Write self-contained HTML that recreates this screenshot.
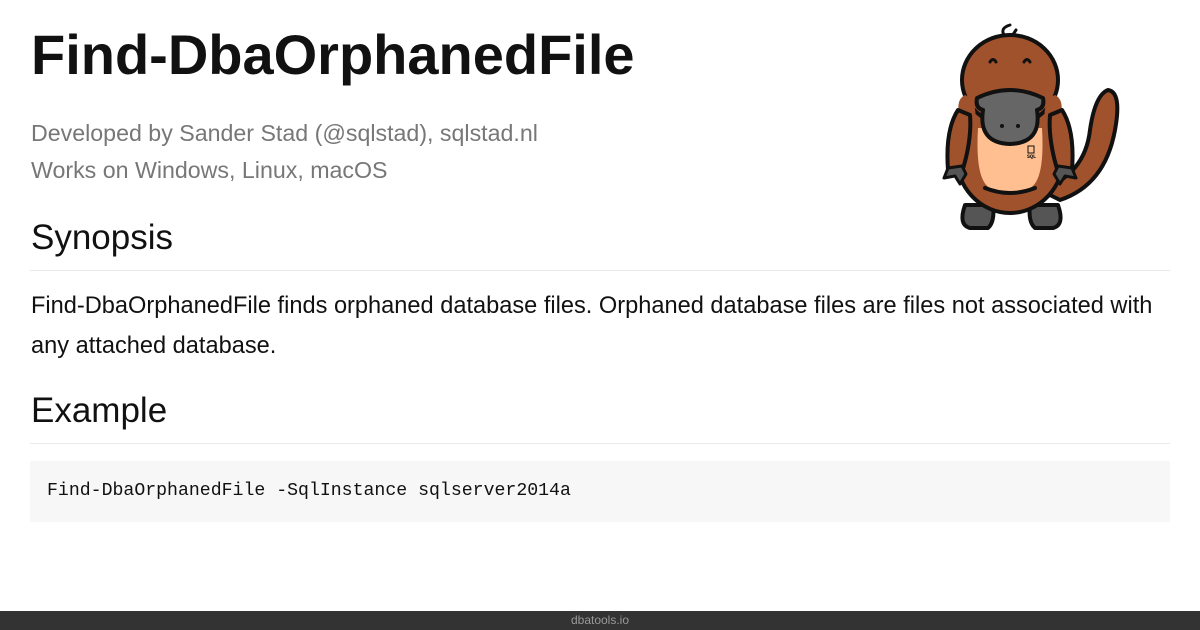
<!DOCTYPE html>
<html><head><style>
body{margin:0;width:1200px;height:630px;background:#fff;position:relative;overflow:hidden;font-family:"Liberation Sans",sans-serif;color:#111}
.a{position:absolute;left:31px;white-space:nowrap}
h1{margin:0;font-size:56px;font-weight:bold;top:22px;letter-spacing:0}
.sub{font-size:23.2px;color:#777}
h2{margin:0;font-weight:normal;font-size:35px}
.hr{position:absolute;left:30px;width:1140px;height:1px;background:#eaeaea}
.p{font-size:23.6px}
.code{position:absolute;left:30px;top:461px;width:1140px;height:61px;background:#f7f7f7}
.code span{position:absolute;left:17px;top:20px;font-family:"Liberation Mono",monospace;font-size:18.2px}
.foot{position:absolute;left:0;top:611px;width:1200px;height:19px;background:#333;color:#999;font-size:12px;text-align:center;line-height:19px}
</style></head><body>
<h1 class="a">Find-DbaOrphanedFile</h1>
<div class="a sub" style="top:120px">Developed by Sander Stad (@sqlstad), sqlstad.nl</div>
<div class="a sub" style="top:157px">Works on Windows, Linux, macOS</div>
<h2 class="a" style="top:218px">Synopsis</h2>
<div class="hr" style="top:270px"></div>
<div class="a p" style="top:293px">Find-DbaOrphanedFile finds orphaned database files. Orphaned database files are files not associated with</div>
<div class="a p" style="top:333px">any attached database.</div>
<h2 class="a" style="top:391px">Example</h2>
<div class="hr" style="top:443px"></div>
<div class="code"><span>Find-DbaOrphanedFile -SqlInstance sqlserver2014a</span></div>
<svg style="position:absolute;left:930px;top:20px" width="200" height="220" viewBox="930 20 200 220">
<g stroke="#111" stroke-width="4" stroke-linejoin="round" stroke-linecap="round">
<path d="M1040 190 Q1085 175 1090 130 Q1095 95 1108 90 Q1122 92 1115 130 Q1105 185 1060 200 Z" fill="#a0522d"/>
<path d="M1004 35 Q1000 28 1010 25 M1012 36 L1016 30" fill="none" stroke-width="3"/>
<path d="M965 205 Q958 225 970 228 L988 228 Q995 222 993 205 Z" fill="#555"/>
<path d="M1030 205 Q1028 222 1035 228 L1053 228 Q1065 225 1058 205 Z" fill="#555"/>
<ellipse cx="1010" cy="155" rx="54" ry="58" fill="#a0522d"/>
<ellipse cx="1010" cy="80" rx="48" ry="45" fill="#a0522d"/>
<path d="M965 95 Q955 100 960 118 L975 125 Q978 100 965 95 Z M1055 95 Q1065 100 1060 118 L1045 125 Q1042 100 1055 95 Z" fill="#a0522d" stroke="none"/>
<path d="M978 128 Q975 180 990 188 Q1010 195 1030 188 Q1045 180 1042 128 Z" fill="#ffbf90" stroke="none"/>
<path d="M985 188 Q1010 198 1035 188" fill="none"/>
<path d="M958 110 Q945 130 948 170 L962 172 Q972 140 970 115 Z" fill="#a0522d"/>
<path d="M1062 110 Q1075 130 1072 170 L1058 172 Q1048 140 1050 115 Z" fill="#a0522d"/>
<path d="M948 168 L944 178 L955 176 L960 184 L966 174 L962 166 Z" fill="#555" stroke-width="3"/>
<path d="M1072 168 L1076 178 L1065 176 L1060 184 L1054 174 L1058 166 Z" fill="#555" stroke-width="3"/>
<path d="M977 98 Q1010 82 1043 98 Q1045 108 1037 110 Q1042 143 1010 144 Q978 143 983 110 Q975 108 977 98 Z" fill="#666"/>
<path d="M990 62 Q993 57 996 62 M1024 62 Q1027 57 1030 62" fill="none" stroke-width="3"/>
</g>
<circle cx="1002" cy="126" r="2" fill="#111"/><circle cx="1018" cy="126" r="2" fill="#111"/>
<text x="1027" y="158" font-size="5" font-family="Liberation Mono" font-weight="bold">SQL</text>
<rect x="1028" y="146" width="6" height="7" fill="none" stroke="#111"/>
</svg>
<div class="foot">dbatools.io</div>
</body></html>
